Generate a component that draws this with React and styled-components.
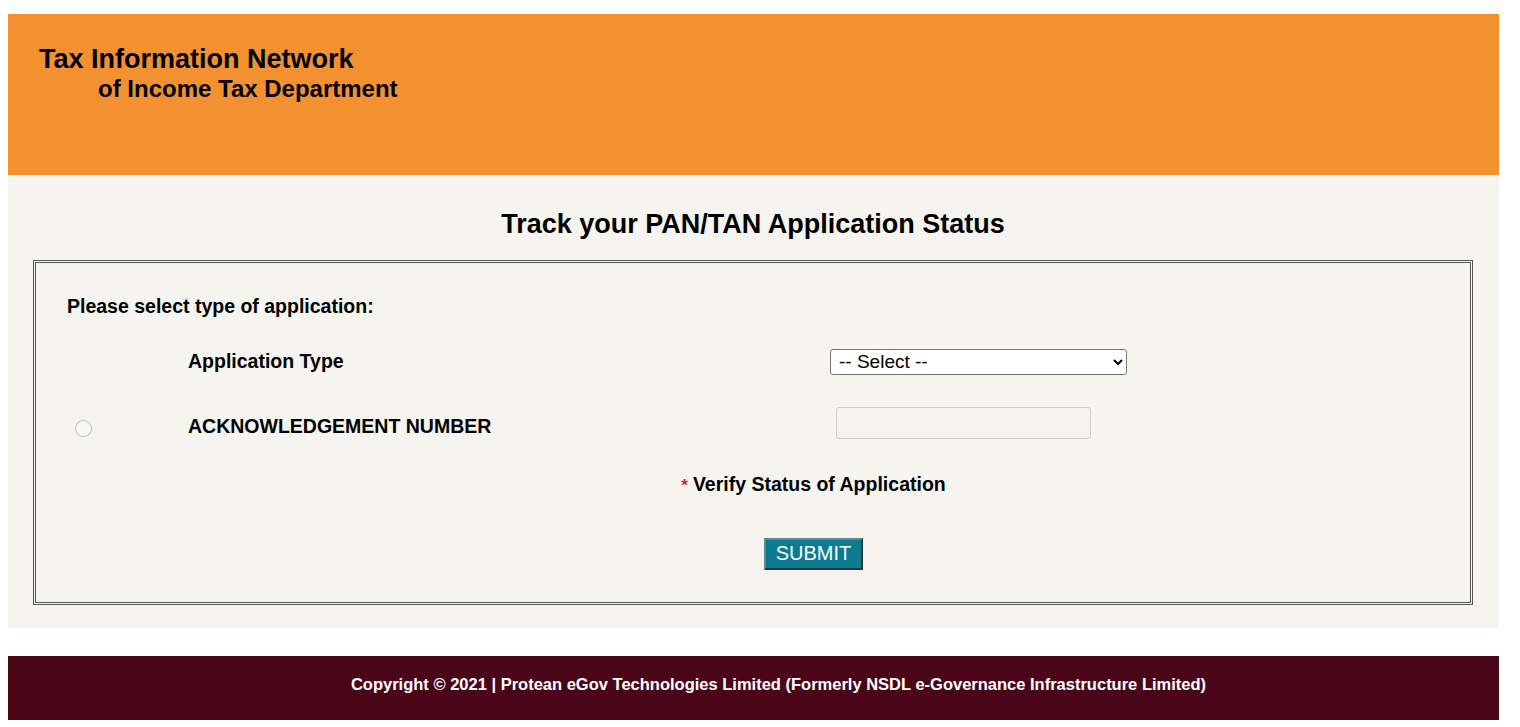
import React from "react";
import styled, { createGlobalStyle } from "styled-components";

const Global = createGlobalStyle`
body{
    margin: 0;
    background: #ffffff;
    font-family: "Liberation Sans", Arial, sans-serif;
}
`;

const Page = styled.div`
width: 1491px;
padding: 14px 0 0 8px;
`;
const Header = styled.header`
height: 161px;
background-color: #f39131;
padding: 30px 0 0 31px;
box-sizing: border-box;
color: #000;
`;
const Brand = styled.div`
font-size: 27px;
font-weight: 700;
line-height: 30px;
`;
const SubBrand = styled.div`
font-size: 24px;
font-weight: 700;
line-height: 30px;
margin-left: 59px;
`;
const Main = styled.main`
background-color: #f5f4ee;
padding: 33px 26px 23px 25px;
`;
const Title = styled.h2`
margin: 0 0 20px;
text-align: center;
font-size: 27px;
line-height: 32px;
font-weight: 700;
color: #000;
`;
const Box = styled.div`
border: 3px double #555;
height: 345px;
box-sizing: border-box;
padding: 31px 0 0 31px;
`;
const Lead = styled.div`
font-size: 19.5px;
font-weight: 700;
line-height: 24px;
`;
const Row = styled.div`
display: grid;
grid-template-columns: 121px 642px 1fr;
align-items: center;
height: ${p => p.h}px;
margin-top: ${p => p.mt}px;
`;
const Label = styled.div`
font-size: 19.5px;
font-weight: 700;
line-height: 24px;
`;
const Select = styled.select`
width: 297px;
height: 26px;
font-family: "Liberation Sans", Arial, sans-serif;
font-size: 19px;
border: 1px solid #767676;
border-radius: 3px;
background: #fff;
padding: 0 4px;
color: #000;
margin-top: 1px;
`;
const Input = styled.input`
width: 255px;
height: 32px;
box-sizing: border-box;
margin: 0 0 5px 6px;
border: 1px solid #ccc;
border-radius: 3px;
background: #f4f3ee;
`;
const Radio = styled.span`
display: block;
width: 17px;
height: 17px;
box-sizing: border-box;
border: 1px solid #bbb;
border-radius: 50%;
background: #f7f7f4;
margin: 5px 0 0 8px;
`;
const Verify = styled.div`
text-align: center;
margin: 31px 0 0 90px;
font-size: 19.5px;
font-weight: 700;
line-height: 24px;
`;
const Star = styled.span`
color: #d21f1f;
font-size: 17px;
margin-right: 5px;
`;
const Actions = styled.div`
display: flex;
justify-content: center;
margin: 40px 0 0 90px;
`;
const Submit = styled.button`
width: 99px;
height: 32px;
background: #0b7b8f;
color: #fff;
font-family: "Liberation Sans", Arial, sans-serif;
font-size: 20px;
line-height: 26px;
border: 2px solid;
border-color: #5b8a90 #23393c #23393c #5b8a90;
padding: 0 0 2px;
`;
const Gap = styled.div`
height: 28px;
`;
const Footer = styled.footer`
height: 64px;
background-color: #4a0519;
color: #fff;
display: flex;
align-items: center;
justify-content: center;
font-size: 16.5px;
font-weight: 700;
padding: 0 0 8px 50px;
box-sizing: border-box;
`;

export default function App(){
    return (
        <Page>
            <Global />
            <Header>
                <Brand>Tax Information Network</Brand>
                <SubBrand>of Income Tax Department</SubBrand>
            </Header>
            <Main>
                <Title>Track your PAN/TAN Application Status</Title>
                <Box>
                    <Lead>Please select type of application:</Lead>
                    <Row h={30} mt={28}>
                        <span />
                        <Label>Application Type</Label>
                        <Select defaultValue="">
                            <option value="">-- Select --</option>
                        </Select>
                    </Row>
                    <Row h={34} mt={31}>
                        <Radio />
                        <Label>ACKNOWLEDGEMENT NUMBER</Label>
                        <Input type="text" />
                    </Row>
                    <Verify><Star>*</Star>Verify Status of Application</Verify>
                    <Actions>
                        <Submit>SUBMIT</Submit>
                    </Actions>
                </Box>
            </Main>
            <Gap />
            <Footer>Copyright © 2021 | Protean eGov Technologies Limited (Formerly NSDL e-Governance Infrastructure Limited)</Footer>
        </Page>
    )
}
